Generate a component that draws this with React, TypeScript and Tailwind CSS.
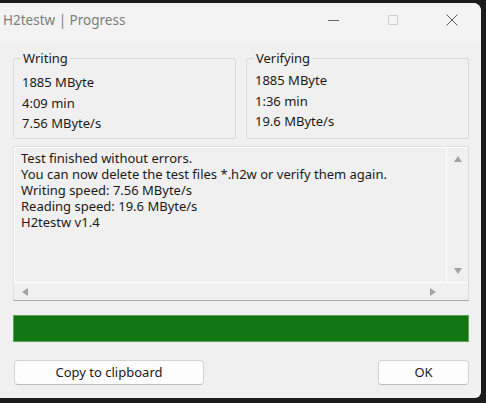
import React from 'react';

const font = { fontFamily: '"Noto Sans", "Open Sans", Arial, sans-serif' };

const GroupBox = ({ title, lines, top }: { title: string; lines: string[]; top: string }) => (
    <fieldset className="flex-1 h-[89px] border border-[#d9d9d9] rounded-[2px] px-[8px] min-w-0">
        <legend className="-ml-[1px] px-[2px] text-[13px] leading-[16px] text-[#1a1a1a]">{title}</legend>
        <div className={`flex flex-col ${top}`}>
            {lines.map((l) => (
                <span key={l} className="text-[13px] leading-[20.5px] text-[#1a1a1a]">
                    {l}
                </span>
            ))}
        </div>
    </fieldset>
);

const Tri = ({ dir }: { dir: 'up' | 'down' | 'left' | 'right' }) => {
    const pts = {
        up: '0,7 4,1 8,7',
        down: '0,1 8,1 4,7',
        left: '7,0 7,8 1,4',
        right: '1,0 1,8 7,4',
    }[dir];
    return (
        <svg width="8" height="8" viewBox="0 0 8 8">
            <polygon points={pts} fill="#a3a3a3" />
        </svg>
    );
};

const App = () => {
    const log = [
        'Test finished without errors.',
        'You can now delete the test files *.h2w or verify them again.',
        'Writing speed: 7.56 MByte/s',
        'Reading speed: 19.6 MByte/s',
        'H2testw v1.4',
    ].join('\n');

    return (
        <div className="w-[486px] h-[403px] bg-[#1b1b1b] flex flex-col overflow-hidden" style={font}>
            <div className="h-[3px] shrink-0" />
            <div className="w-[481px] h-[395px] bg-[#f0f0f0] rounded-tr-[8px] rounded-br-[6px] flex flex-col">
                {/* title bar */}
                <div className="h-[40px] shrink-0 flex items-center bg-[#f3f3f3] rounded-tr-[8px]">
                    <span className="pl-[3px] text-[13.5px] text-[#7d7d7d] -mt-[6px]">H2testw | Progress</span>
                    <div className="ml-auto flex items-center -mt-[6px]">
                        <div className="w-[58px] flex justify-center pr-[6px]">
                            <div className="w-[11px] h-px bg-[#6a6a6a]" />
                        </div>
                        <div className="w-[58px] flex justify-center pr-[3px]">
                            <div className="w-[10px] h-[10px] border border-[#cfcfcf] rounded-[1px]" />
                        </div>
                        <div className="w-[58px] flex justify-center">
                            <svg width="12" height="12" viewBox="0 0 12 12">
                                <path d="M0.5 0.5 L11.5 11.5 M11.5 0.5 L0.5 11.5" stroke="#5a5a5a" strokeWidth="1" />
                            </svg>
                        </div>
                    </div>
                </div>

                <div className="flex flex-col pl-[13px] pr-[12px] pt-[7px]">
                    {/* group boxes */}
                    <div className="flex gap-[10px]">
                        <GroupBox title="Writing" top="pt-[6px]" lines={['1885 MByte', '4:09 min', '7.56 MByte/s']} />
                        <GroupBox title="Verifying" top="pt-[4px]" lines={['1885 MByte', '1:36 min', '19.6 MByte/s']} />
                    </div>

                    {/* log area */}
                    <div className="mt-[7px] h-[155px] border border-[#e2e2e2] border-b-[#a9a9a9] border-r-[#dadada] flex flex-col">
                        <div className="flex flex-1 min-h-0 border-t border-l border-white">
                            <div className="flex-1 pl-[6px] pt-[2px] text-[13px] leading-[16px] text-[#1a1a1a] whitespace-pre">
                                {log}
                            </div>
                            <div className="w-[22px] border-l border-white flex flex-col items-center justify-between py-[7px]">
                                <Tri dir="up" />
                                <Tri dir="down" />
                            </div>
                        </div>
                        <div className="h-[18px] flex border-t border-white">
                            <div className="flex-1 flex items-center justify-between pl-[7px] pr-[9px]">
                                <Tri dir="left" />
                                <Tri dir="right" />
                            </div>
                            <div className="w-[22px]" />
                        </div>
                    </div>

                    {/* progress */}
                    <div className="mt-[14px] h-[27px] bg-[#127712] border border-[#58a558]" />

                    {/* buttons */}
                    <div className="mt-[18px] flex justify-between pl-[1px]">
                        <button className="w-[190px] h-[25px] bg-[#fdfdfd] border border-[#d3d3d3] border-b-[#bdbdbd] rounded-[4px] text-[13px] text-[#1a1a1a]">
                            Copy to clipboard
                        </button>
                        <button className="w-[91px] h-[25px] bg-[#fdfdfd] border border-[#d3d3d3] border-b-[#bdbdbd] rounded-[4px] text-[13px] text-[#1a1a1a]">
                            OK
                        </button>
                    </div>
                </div>
            </div>
        </div>
    );
};

export default App;
